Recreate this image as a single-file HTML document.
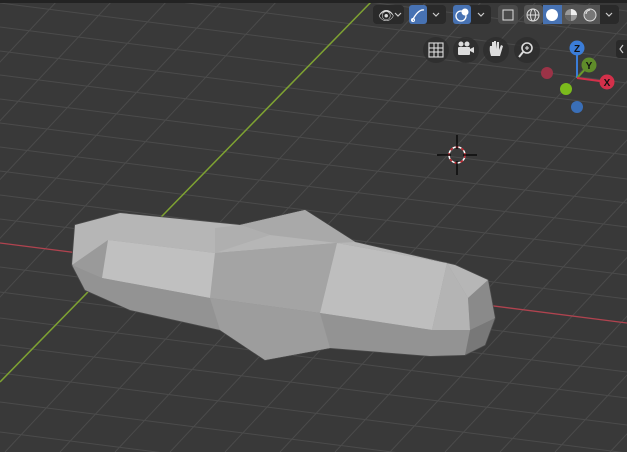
<!DOCTYPE html>
<html><head><style>
html,body{margin:0;padding:0;width:627px;height:452px;overflow:hidden;background:#393939}
svg{position:absolute;left:0;top:0;display:block}
</style></head><body>
<svg width="627" height="452" viewBox="0 0 627 452" xmlns="http://www.w3.org/2000/svg" font-family="Liberation Sans, sans-serif">
<rect width="627" height="452" fill="#393939"/>
<g stroke="#4b4b4b" stroke-width="1">
<line x1="0" y1="3" x2="627" y2="83"/>
<line x1="0" y1="27" x2="627" y2="107"/>
<line x1="0" y1="51" x2="627" y2="131"/>
<line x1="0" y1="75" x2="627" y2="155"/>
<line x1="0" y1="99" x2="627" y2="179"/>
<line x1="0" y1="123" x2="627" y2="203"/>
<line x1="0" y1="147" x2="627" y2="227"/>
<line x1="0" y1="171" x2="627" y2="251"/>
<line x1="0" y1="195" x2="627" y2="275"/>
<line x1="0" y1="219" x2="627" y2="299"/>
<line x1="0" y1="267" x2="627" y2="347"/>
<line x1="0" y1="292" x2="627" y2="372"/>
<line x1="0" y1="318" x2="627" y2="398"/>
<line x1="0" y1="345" x2="627" y2="425"/>
<line x1="0" y1="373" x2="627" y2="453"/>
<line x1="0" y1="402" x2="627" y2="482"/>
<line x1="0" y1="432" x2="627" y2="512"/>
<line x1="0" y1="-21" x2="627" y2="59"/>
<line x1="0" y1="-45" x2="627" y2="35"/>
<line x1="0" y1="-69" x2="627" y2="11"/>
<line x1="-52" y1="0" x2="-475" y2="452"/>
<line x1="3" y1="0" x2="-420" y2="452"/>
<line x1="58" y1="0" x2="-365" y2="452"/>
<line x1="113" y1="0" x2="-310" y2="452"/>
<line x1="168" y1="0" x2="-255" y2="452"/>
<line x1="223" y1="0" x2="-200" y2="452"/>
<line x1="278" y1="0" x2="-145" y2="452"/>
<line x1="428" y1="0" x2="5" y2="452"/>
<line x1="483" y1="0" x2="60" y2="452"/>
<line x1="538" y1="0" x2="115" y2="452"/>
<line x1="593" y1="0" x2="170" y2="452"/>
<line x1="648" y1="0" x2="225" y2="452"/>
<line x1="703" y1="0" x2="280" y2="452"/>
<line x1="758" y1="0" x2="335" y2="452"/>
<line x1="813" y1="0" x2="390" y2="452"/>
<line x1="868" y1="0" x2="445" y2="452"/>
<line x1="923" y1="0" x2="500" y2="452"/>
<line x1="978" y1="0" x2="555" y2="452"/>
<line x1="1033" y1="0" x2="610" y2="452"/>
</g>
<line x1="0" y1="243" x2="627" y2="323" stroke="#b0434f" stroke-width="1.3"/>
<line x1="373" y1="0" x2="0" y2="382" stroke="#7ea232" stroke-width="1.5"/>
<!-- object -->
<polygon points="75,225 120,213 240,225 305,210 355,242 455,265 488,280 495,318 485,345 465,355 430,356 330,348 265,360 220,330 130,310 85,290 72,265" fill="#9a9a9a" stroke="#4a4a4a" stroke-width="1.5"/>
<polygon points="75,225 120,213 240,225 305,210 355,242 455,265 488,280 468,298 447,263 337,243 215,253 108,240 72,265" fill="#b6b6b6"/>
<polygon points="215,253 337,243 320,313 210,298" fill="#a4a4a4"/>
<polygon points="240,225 305,210 355,242 337,243 270,235" fill="#a9a9a9"/>
<polygon points="215,228 240,225 270,235 215,253" fill="#afafaf"/>
<polygon points="108,240 215,253 210,298 102,278" fill="#c0c0c0"/>
<polygon points="337,243 447,263 432,330 320,313" fill="#bebebe"/>
<polygon points="447,263 468,298 470,330 432,330" fill="#b4b4b4"/>
<polygon points="468,298 488,280 495,318 470,330" fill="#8a8a8a"/>
<polygon points="72,265 102,278 210,298 320,313 432,330 470,330 465,355 430,356 330,348 265,360 220,330 130,310 85,290" fill="#939393"/>
<polygon points="210,298 320,313 330,348 265,360 220,330" fill="#9d9d9d"/>
<polygon points="470,330 495,318 485,345 465,355" fill="#787878"/>
<!-- top bar -->
<rect x="0" y="0" width="627" height="3" fill="#232323"/>
<!-- header buttons -->
<rect x="373" y="5" width="31" height="19" rx="4" fill="#2a2a2a"/>
<text x="378" y="20" font-size="13" fill="#ddd">👁</text>
<path d="M395 13l3 3 3-3" stroke="#ccc" fill="none" stroke-width="1.2"/>
<rect x="409" y="5" width="37" height="19" rx="4" fill="#2a2a2a"/>
<rect x="409" y="5" width="18" height="19" rx="3" fill="#4772b3"/>
<path d="M412 21 Q418 9 424 10" stroke="#fff" fill="none" stroke-width="1.3"/><circle cx="413" cy="20" r="1.5" fill="none" stroke="#fff"/>
<path d="M433 13l3 3 3-3" stroke="#ccc" fill="none" stroke-width="1.2"/>
<rect x="453" y="5" width="38" height="19" rx="4" fill="#2a2a2a"/>
<rect x="453" y="5" width="18" height="19" rx="3" fill="#4772b3"/>
<circle cx="461" cy="16" r="5" fill="none" stroke="#fff" stroke-width="1.3"/><circle cx="465" cy="12" r="3.5" fill="#fff"/>
<path d="M478 13l3 3 3-3" stroke="#ccc" fill="none" stroke-width="1.2"/>
<rect x="498" y="5" width="20" height="19" rx="4" fill="#4a4a4a"/>
<rect x="503" y="10" width="10" height="10" fill="none" stroke="#ddd" stroke-width="1"/>
<rect x="524" y="5" width="95" height="19" rx="4" fill="#2a2a2a"/>
<rect x="524" y="5" width="19" height="19" rx="3" fill="#545454"/>
<circle cx="533" cy="15" r="6" fill="none" stroke="#ddd"/><line x1="527" y1="15" x2="539" y2="15" stroke="#ddd"/><ellipse cx="533" cy="15" rx="2.5" ry="6" fill="none" stroke="#ddd"/>
<rect x="543" y="5" width="19" height="19" fill="#4772b3"/>
<circle cx="552" cy="15" r="6" fill="#fff"/>
<rect x="562" y="5" width="19" height="19" fill="#545454"/>
<circle cx="571" cy="15" r="6" fill="#999"/><path d="M571 9 A6 6 0 0 1 577 15 L571 15Z" fill="#eee"/><path d="M565 15 A6 6 0 0 0 571 21 L571 15Z" fill="#666"/>
<rect x="581" y="5" width="19" height="19" fill="#545454"/>
<circle cx="590" cy="15" r="6" fill="#777" stroke="#ddd"/><path d="M586 14 A4 4 0 0 1 590 10" stroke="#eee" fill="none"/>
<path d="M606 13l3 3 3-3" stroke="#ccc" fill="none" stroke-width="1.2"/>
<!-- nav circles -->
<g fill="#2e2e2e" fill-opacity="0.85">
<circle cx="436" cy="50" r="13"/><circle cx="466" cy="50" r="13"/><circle cx="496" cy="50" r="13"/><circle cx="527" cy="50" r="13"/></g>
<g stroke="#ddd" fill="none" stroke-width="1.1">
<rect x="429" y="43" width="14" height="14"/><line x1="429" y1="48" x2="443" y2="48"/><line x1="429" y1="52" x2="443" y2="52"/><line x1="434" y1="43" x2="434" y2="57"/><line x1="438" y1="43" x2="438" y2="57"/>
<circle cx="527" cy="48" r="5" stroke-width="1.6"/><line x1="523" y1="52" x2="519" y2="57" stroke-width="2"/><line x1="525" y1="48" x2="529" y2="48"/><line x1="527" y1="46" x2="527" y2="50"/>
</g>
<rect x="458" y="47" width="12" height="8" rx="1" fill="#ddd"/><circle cx="461" cy="44" r="2.5" fill="#ddd"/><circle cx="467" cy="44" r="2.5" fill="#ddd"/><path d="M470 49l4-2v6l-4-2z" fill="#ddd"/>
<path d="M491 56 Q489 50 490 46 L492 46 L492 50 L492 42 L494 42 L494 49 L494 41 L496 41 L496 49 L497 42 L499 42 L499 50 L501 45 L503 46 L500 56Z" fill="#ddd"/>
<!-- gizmo -->
<line x1="577" y1="78" x2="577" y2="48" stroke="#3b7dd8" stroke-width="2"/>
<line x1="577" y1="78" x2="589" y2="65" stroke="#6a9a2a" stroke-width="2"/>
<line x1="577" y1="78" x2="607" y2="82" stroke="#d4304a" stroke-width="2"/>
<circle cx="547" cy="73" r="6" fill="#9b3347"/>
<circle cx="566" cy="89" r="6" fill="#7bbb1c"/>
<circle cx="577" cy="107" r="6" fill="#3a6fb8"/>
<circle cx="577" cy="48" r="7.5" fill="#3b7dd8"/>
<circle cx="589" cy="65" r="7.5" fill="#5f8c2a"/>
<circle cx="607" cy="82" r="7.5" fill="#d4304a"/>
<text x="577" y="52" font-size="10" font-weight="bold" text-anchor="middle" fill="#111">Z</text>
<text x="589" y="69" font-size="10" font-weight="bold" text-anchor="middle" fill="#111">Y</text>
<text x="607" y="86" font-size="10" font-weight="bold" text-anchor="middle" fill="#111">X</text>
<rect x="616" y="40" width="14" height="18" rx="3" fill="#2a2a2a"/>
<path d="M623 45l-3 4 3 4" stroke="#ccc" fill="none" stroke-width="1.2"/>
<!-- 3d cursor -->
<circle cx="457" cy="155" r="8" fill="none" stroke="#fff" stroke-width="1.5"/>
<circle cx="457" cy="155" r="8" fill="none" stroke="#c0202a" stroke-width="1.5" stroke-dasharray="3 3"/>
<g stroke="#000" stroke-width="1.2"><line x1="457" y1="135" x2="457" y2="149"/><line x1="457" y1="161" x2="457" y2="175"/><line x1="437" y1="155" x2="451" y2="155"/><line x1="463" y1="155" x2="477" y2="155"/></g>
</svg>
</body></html>
